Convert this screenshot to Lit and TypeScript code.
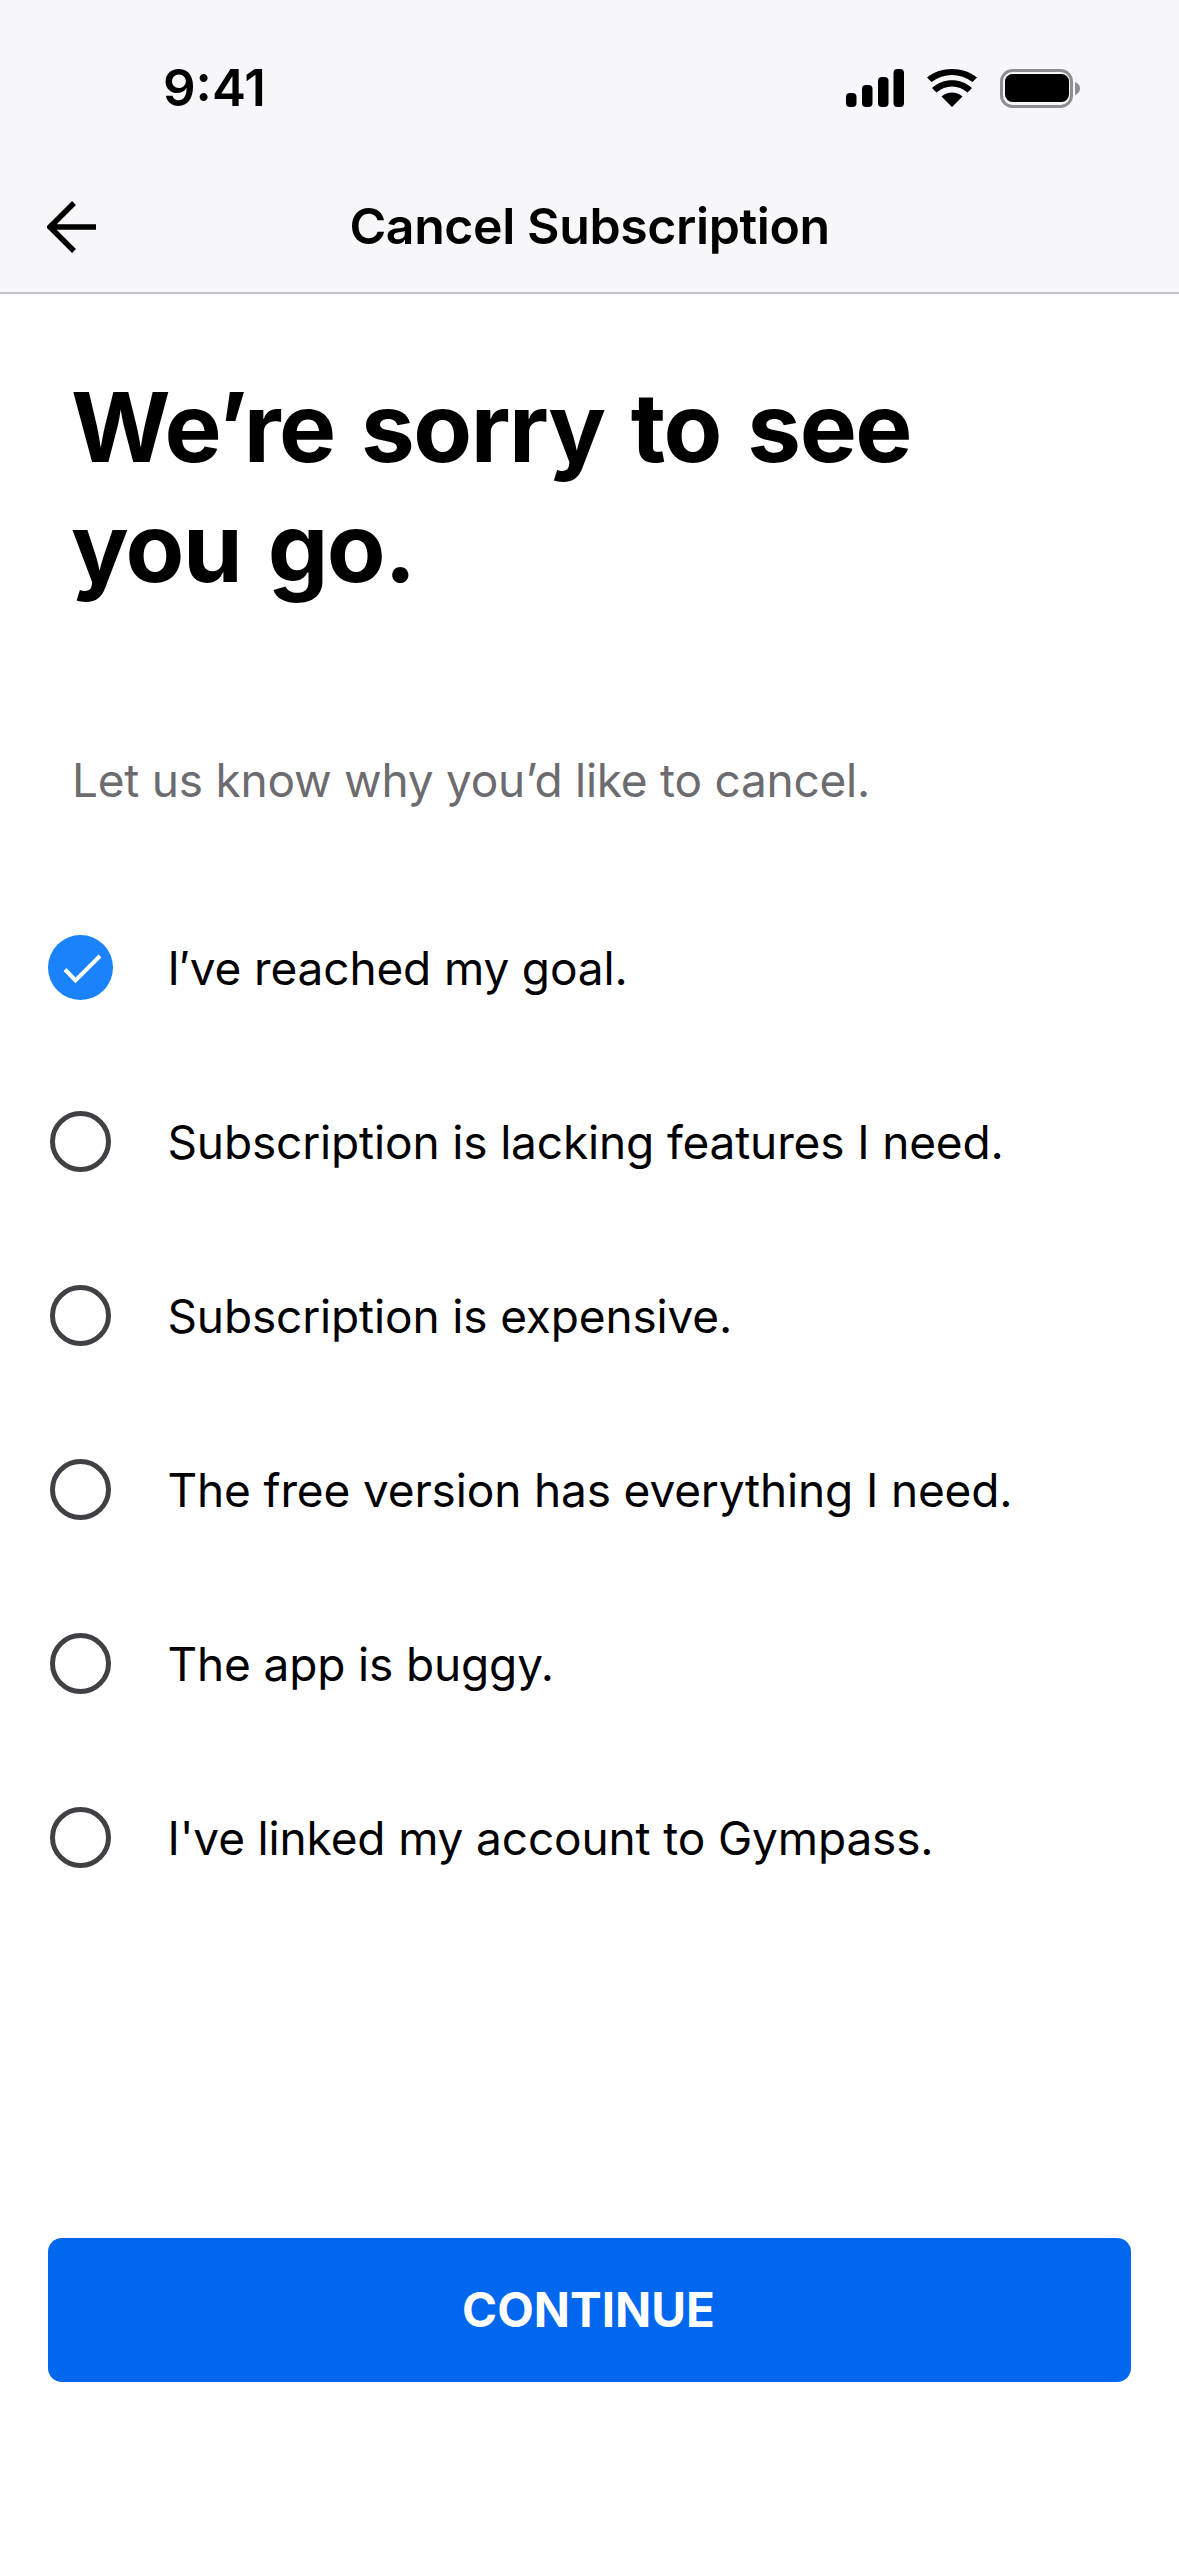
import { LitElement, html, css } from "lit";
import { customElement } from "lit/decorators.js";

const reasons = [
  "I′ve reached my goal.",
  "Subscription is lacking features I need.",
  "Subscription is expensive.",
  "The free version has everything I need.",
  "The app is buggy.",
  "I've linked my account to Gympass.",
];

@customElement("app-root")
export class AppRoot extends LitElement {
  static styles = css`
    :host {
      display: flex;
      flex-direction: column;
      width: 1179px;
      height: 2556px;
      background: #fff;
      font-family: Inter, "Liberation Sans", sans-serif;
      color: #000;
      overflow: hidden;
    }
    .top {
      height: 294px;
      box-sizing: border-box;
      background: #f7f7fa;
      border-bottom: 2px solid #c4c4c6;
      display: flex;
      flex-direction: column;
    }
    .status {
      height: 174px;
      box-sizing: border-box;
      display: flex;
      align-items: flex-start;
      justify-content: space-between;
      padding: 57px 99px 0 163px;
    }
    .time {
      font-size: 51px;
      font-weight: 600;
      line-height: 61px;
    }
    .status-icons {
      display: flex;
      align-items: flex-start;
      gap: 23px;
      padding-top: 12px;
    }
    .nav {
      position: relative;
      height: 104px;
      display: flex;
      align-items: center;
      justify-content: center;
    }
    .back {
      position: absolute;
      left: 47px;
      top: 27px;
    }
    .title {
      font-size: 50px;
      font-weight: 600;
      line-height: 60px;
      letter-spacing: -0.4px;
    }
    .content {
      flex: 1;
      display: flex;
      flex-direction: column;
      padding: 0 48px;
    }
    h1 {
      margin: 73px 0 0 23px;
      font-size: 96px;
      line-height: 120px;
      font-weight: 700;
      letter-spacing: -1.45px;
      word-spacing: 5px;
    }
    .sub {
      margin: 144px 0 0 24px;
      font-size: 46px;
      line-height: 58px;
      color: #6c6c70;
      font-weight: 400;
      letter-spacing: -0.25px;
    }
    .list {
      display: flex;
      flex-direction: column;
      gap: 109px;
      margin-top: 126px;
    }
    .row {
      display: flex;
      align-items: center;
      height: 65px;
      gap: 54.5px;
      font-size: 46px;
      letter-spacing: -0.15px;
    }
    .radio {
      width: 65px;
      height: 65px;
      flex: none;
      display: block;
    }
    .spacer {
      flex: 1;
    }
    .btn {
      height: 144px;
      margin-bottom: 174px;
      border: 0;
      border-radius: 14px;
      background: #0067ee;
      color: #fff;
      font-family: inherit;
      font-size: 47.5px;
      font-weight: 700;
      display: flex;
      align-items: center;
      justify-content: center;
      padding-bottom: 1px;
      padding-right: 2px;
      box-sizing: border-box;
    }
  `;

  render() {
    return html`
      <div class="top">
        <div class="status">
          <span class="time">9:41</span>
          <div class="status-icons">
            <svg width="58" height="38" viewBox="0 0 58 38">
              <rect x="0" y="24" width="10.5" height="14" rx="4" />
              <rect x="16" y="16" width="10.5" height="22" rx="4" />
              <rect x="32" y="8" width="10.5" height="30" rx="4" />
              <rect x="47.5" y="0" width="10.5" height="38" rx="4" />
            </svg>
            <svg width="50" height="38" viewBox="0 0 50 38">
              <path d="M25 38 L14.5 27.5 C20.5 22 29.5 22 35.5 27.5 Z" />
              <path d="M9.5 22.5 L5 18 C16 7.5 34 7.5 45 18 L40.5 22.5 C31.5 14.5 18.5 14.5 9.5 22.5 Z" transform="translate(0 1)" />
              <path d="M4.5 13 L0 8.5 C14 -2.8 36 -2.8 50 8.5 L45.5 13 C33 3.5 17 3.5 4.5 13 Z" />
            </svg>
            <svg width="80" height="39" viewBox="0 0 80 39">
              <rect x="1.5" y="1.5" width="70" height="36" rx="11" fill="none" stroke="#8e8e91" stroke-width="3" />
              <rect x="5" y="5" width="64" height="28" rx="7.5" />
              <path d="M75 13 C78 14 80 16.5 80 19.5 C80 22.5 78 25 75 26 Z" fill="#8e8e91" />
            </svg>
          </div>
        </div>
        <div class="nav">
          <svg class="back" width="50" height="52" viewBox="0 0 50 52" fill="none" stroke="#000" stroke-width="5.5">
            <path d="M49 26 H4 M27 2 L3 26 L27 50" />
          </svg>
          <span class="title">Cancel Subscription</span>
        </div>
      </div>
      <div class="content">
        <h1>We’re sorry to see<br />you go.</h1>
        <div class="sub">Let us know why you’d like to cancel.</div>
        <div class="list">
          ${reasons.map(
            (r, i) => html`
              <div class="row">
                ${i === 0
                  ? html`<svg class="radio" viewBox="0 0 65 65">
                      <circle cx="32.5" cy="32.5" r="32.5" fill="#1a82fb" />
                      <path d="M17 34.5 L27.5 45.5 L52 21" fill="none" stroke="#fff" stroke-width="4" />
                    </svg>`
                  : html`<svg class="radio" viewBox="0 0 65 65">
                      <circle cx="32.5" cy="32.5" r="28" fill="none" stroke="#404045" stroke-width="5" />
                    </svg>`}
                <span>${r}</span>
              </div>
            `
          )}
        </div>
        <div class="spacer"></div>
        <div class="btn">CONTINUE</div>
      </div>
    `;
  }
}
